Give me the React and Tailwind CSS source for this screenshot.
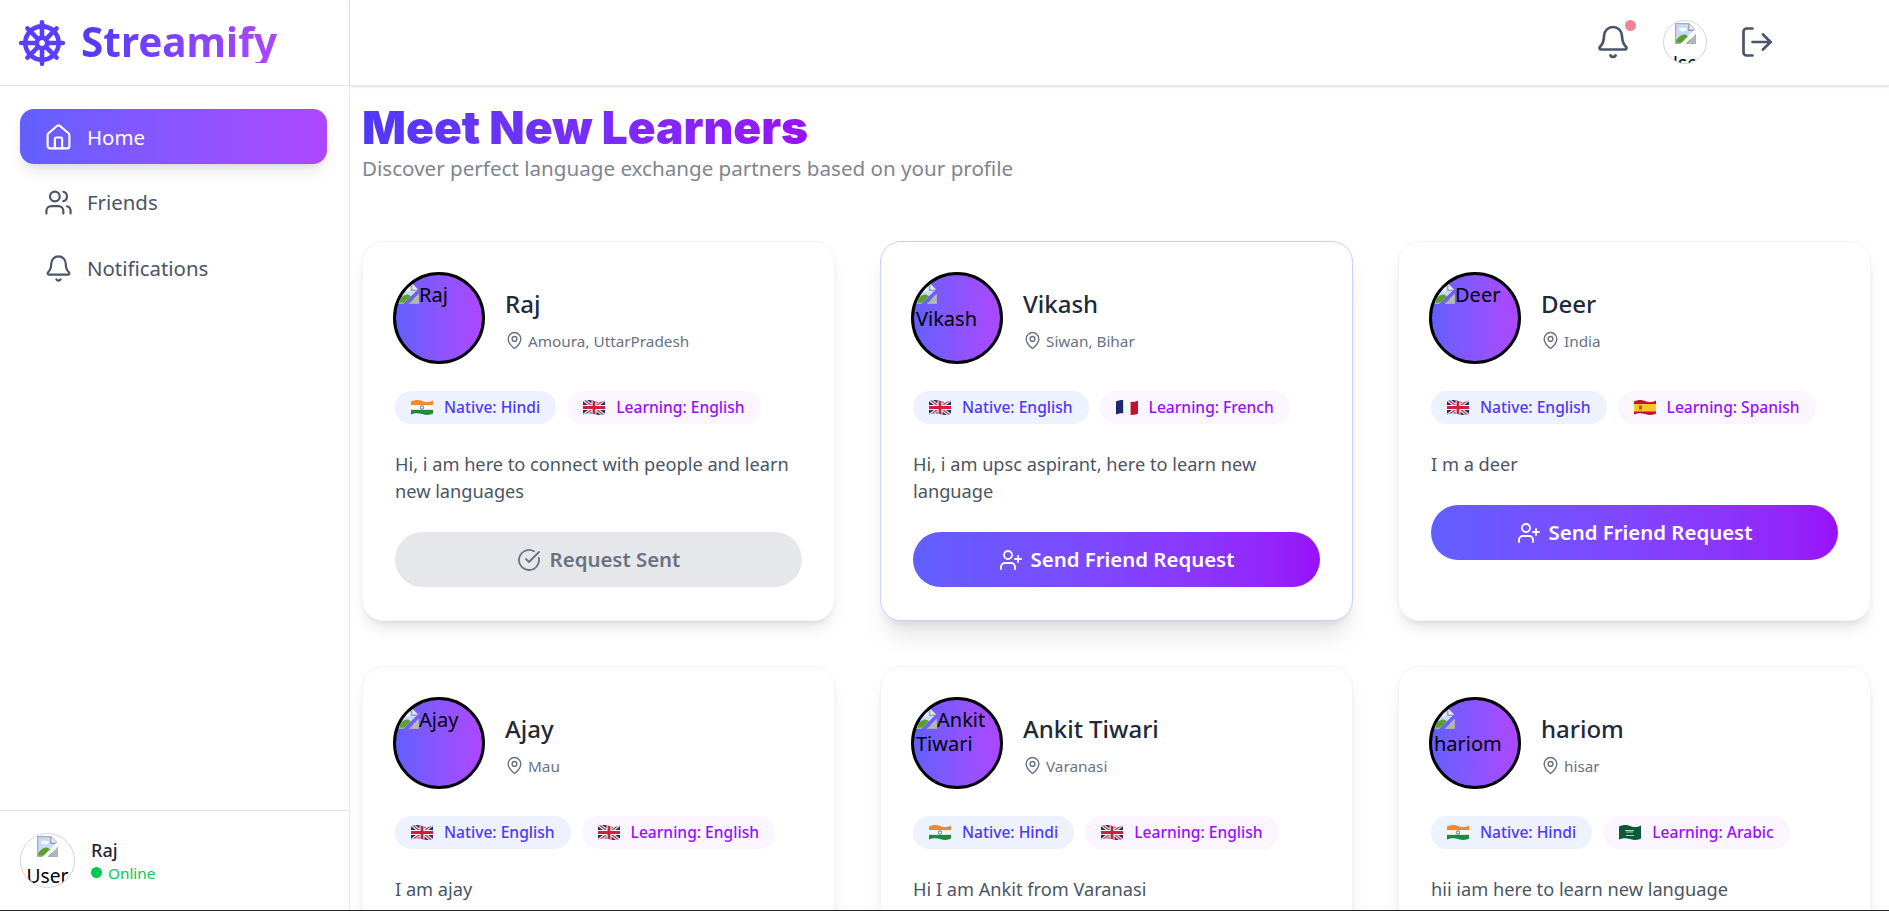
import { ShipWheel, House, Users, Bell, LogOut, MapPin, UserPlus, CircleCheckBig } from 'lucide-react'

const WAVE = 'M0 2.5C4 .5 8 .5 11 2s7 1.5 11-.5v13c-4 2-7 1.5-11 .5s-7-1-11 .5z'

function Flag({ code }) {
  return (
    <svg viewBox="0 0 22 17" className="w-[22px] h-[17px] shrink-0">
      <clipPath id={`wave-${code}`}>
        <path d={WAVE} />
      </clipPath>
      <g clipPath={`url(#wave-${code})`}>
        {code === 'in' && (
          <>
            <rect width="22" height="6.5" fill="#f08a2c" />
            <rect y="6.2" width="22" height="4.8" fill="#f8f8f8" />
            <rect y="10.8" width="22" height="7" fill="#1f8a3b" />
            <circle cx="11" cy="8.5" r="1.7" fill="none" stroke="#2a3a8c" strokeWidth=".7" />
          </>
        )}
        {code === 'uk' && (
          <>
            <rect width="22" height="17" fill="#1f2f6e" />
            <path d="M0 0l22 17M22 0L0 17" stroke="#f4f4f4" strokeWidth="3.4" />
            <path d="M0 0l22 17M22 0L0 17" stroke="#cf1f3f" strokeWidth="1.2" />
            <path d="M11 0v17M0 8.5h22" stroke="#f4f4f4" strokeWidth="5" />
            <path d="M11 0v17M0 8.5h22" stroke="#cf1f3f" strokeWidth="2.8" />
          </>
        )}
        {code === 'fr' && (
          <>
            <rect width="7.5" height="17" fill="#1a2a6c" />
            <rect x="7.3" width="7.4" height="17" fill="#f6f6f6" />
            <rect x="14.6" width="7.4" height="17" fill="#c8102e" />
          </>
        )}
        {code === 'es' && (
          <>
            <rect width="22" height="17" fill="#c8102e" />
            <rect y="5" width="22" height="7.5" fill="#f7c52c" />
            <rect x="5" y="6.5" width="3" height="4" fill="#b5532a" />
          </>
        )}
        {code === 'sa' && (
          <>
            <rect width="22" height="17" fill="#0b5a34" />
            <path d="M6 6.5h9M7 8h7M7 11.5h8" stroke="#dfeee6" strokeWidth=".8" />
          </>
        )}
      </g>
    </svg>
  )
}

// chrome's broken image glyph, the tear stays see-through
function BrokenImage() {
  return (
    <svg viewBox="0 0 16 16" className="inline-block w-[21px] h-[21px] relative -top-[3px]">
      <clipPath id="torn-image">
        <path d="M0 0h16v4L4 16H0zM16 8v8H8z" />
      </clipPath>
      <g clipPath="url(#torn-image)">
        <path d="M.5.5h10l5 5v10H.5z" fill="#c9dbf6" stroke="#a9adb3" />
        <path d="M10.5.5v5h5" fill="#eceef1" stroke="#9aa0a6" />
        <ellipse cx="6" cy="5" rx="3" ry="1.5" fill="#f4f7fc" />
        <path d="M1 15v-2c2-3 5-5 7-4s3 2 5 6z" fill="#5aa02c" />
        <path d="M9 15.5h6.5V9z" fill="#b3b6ba" />
      </g>
    </svg>
  )
}

function AltAvatar({ alt, className }) {
  return (
    <div className={`rounded-full overflow-hidden shrink-0 text-black ${className}`}>
      <BrokenImage />
      {alt}
    </div>
  )
}

function NavItem({ icon: Icon, label, active }) {
  return (
    <a
      className={`flex items-center gap-[14px] h-[55px] pl-[24px] pt-[1px] rounded-[14px] text-[20.4px] ${
        active
          ? 'bg-gradient-to-r from-indigo-500 to-purple-500 text-white shadow-lg'
          : 'text-gray-600'
      }`}
    >
      <Icon className="w-[29px] h-[29px] shrink-0" strokeWidth={1.8} />
      {label}
    </a>
  )
}

function Tag({ code, label, learning }) {
  return (
    <span
      className={`flex items-center gap-[11px] h-[33px] px-[16px] rounded-full text-[15.6px] font-medium ${
        learning ? 'bg-purple-50 text-purple-600' : 'bg-indigo-50 text-indigo-600'
      }`}
    >
      <Flag code={code} />
      {label}
    </span>
  )
}

function LearnerCard({ user, highlighted }) {
  return (
    <div
      className={`bg-white rounded-[21px] border px-[32px] pt-[30px] pb-[33px] ${
        highlighted ? 'border-indigo-200 shadow-xl' : 'border-gray-100 shadow-lg'
      }`}
    >
      <div className="flex items-center gap-[20px] -ml-[2px]">
        <AltAvatar
          alt={user.name}
          className="w-[92px] h-[92px] border-[3px] border-black bg-gradient-to-r from-indigo-500 to-purple-500 text-[20px] leading-[24px] pl-[2px] pr-[3px] pt-[8px]"
        />
        <div className="pt-[4px]">
          <div className="text-[24px] leading-[32px] font-medium text-gray-800">{user.name}</div>
          <div className="flex items-center gap-[4px] mt-[9px] text-[15.3px] leading-[24px] text-gray-500">
            <MapPin className="w-[19px] h-[19px]" strokeWidth={1.8} />
            {user.location}
          </div>
        </div>
      </div>
      <div className="flex gap-[11px] mt-[27px]">
        <Tag code={user.nativeFlag} label={`Native: ${user.native}`} />
        <Tag code={user.learningFlag} label={`Learning: ${user.learning}`} learning />
      </div>
      <p className="mt-[27px] text-[18.2px] leading-[27px] text-gray-600">{user.bio}</p>
      {user.sent ? (
        <button className="w-full h-[55px] mt-[27px] flex items-center justify-center gap-[9px] rounded-full bg-gray-200 text-gray-500 text-[20.4px] font-semibold">
          <CircleCheckBig className="w-6 h-6" strokeWidth={1.8} />
          Request Sent
        </button>
      ) : (
        <button className="w-full h-[55px] mt-[27px] flex items-center justify-center gap-[8px] rounded-full bg-gradient-to-r from-indigo-500 to-purple-600 text-white text-[20.4px] font-semibold">
          <UserPlus className="w-6 h-6" strokeWidth={1.8} />
          Send Friend Request
        </button>
      )}
    </div>
  )
}

const learners = [
  { name: 'Raj', location: 'Amoura, UttarPradesh', nativeFlag: 'in', native: 'Hindi', learningFlag: 'uk', learning: 'English', bio: 'Hi, i am here to connect with people and learn new languages', sent: true },
  { name: 'Vikash', location: 'Siwan, Bihar', nativeFlag: 'uk', native: 'English', learningFlag: 'fr', learning: 'French', bio: 'Hi, i am upsc aspirant, here to learn new language' },
  { name: 'Deer', location: 'India', nativeFlag: 'uk', native: 'English', learningFlag: 'es', learning: 'Spanish', bio: 'I m a deer' },
  { name: 'Ajay', location: 'Mau', nativeFlag: 'uk', native: 'English', learningFlag: 'uk', learning: 'English', bio: 'I am ajay' },
  { name: 'Ankit Tiwari', location: 'Varanasi', nativeFlag: 'in', native: 'Hindi', learningFlag: 'uk', learning: 'English', bio: 'Hi I am Ankit from Varanasi' },
  { name: 'hariom', location: 'hisar', nativeFlag: 'in', native: 'Hindi', learningFlag: 'sa', learning: 'Arabic', bio: 'hii iam here to learn new language' },
]

export default function App() {
  return (
    <div className="h-[911px] flex flex-col overflow-hidden bg-white font-['Noto_Sans','Open_Sans',sans-serif]">
      <div className="flex flex-1 min-h-0">
        <aside className="w-[350px] shrink-0 flex flex-col border-r border-gray-200">
          <div className="h-[86px] shrink-0 flex items-center gap-[14px] pl-[17px] border-b border-gray-200">
            <ShipWheel className="w-[50px] h-[50px] text-[#5a3dff]" strokeWidth={2.2} />
            <span className="text-[40.5px] leading-none font-bold bg-gradient-to-r from-indigo-600 to-purple-500 bg-clip-text text-transparent">
              Streamify
            </span>
          </div>
          <nav className="flex flex-col gap-[10.5px] pl-[20px] pr-[22px] pt-[23px]">
            <NavItem icon={House} label="Home" active />
            <NavItem icon={Users} label="Friends" />
            <NavItem icon={Bell} label="Notifications" />
          </nav>
          <div className="mt-auto h-[100px] flex items-center gap-[16px] pl-[20px] border-t border-gray-200">
            <AltAvatar alt="User" className="w-[55px] h-[55px] border border-gray-300 text-[19.2px] leading-[28px] text-center" />
            <div>
              <div className="text-[18px] leading-[24px] font-medium text-gray-800">Raj</div>
              <div className="flex items-center gap-[6px] text-[15.3px] leading-[22px] text-green-500">
                <span className="w-[11px] h-[11px] rounded-full bg-green-500" />
                Online
              </div>
            </div>
          </div>
        </aside>
        <div className="flex-1 min-w-0 flex flex-col">
          <header className="h-[86px] shrink-0 flex items-center justify-end gap-[32px] pr-[114px] pb-[2px] border-b border-gray-200 shadow-sm">
            <div className="relative">
              <Bell className="w-9 h-9 text-gray-600" strokeWidth={1.8} />
              <span className="absolute -top-[4px] -right-[5px] w-[11px] h-[11px] rounded-full bg-[#ee8593]" />
            </div>
            <AltAvatar alt="User" className="w-[44px] h-[44px] border border-gray-300 text-[19.2px] leading-[28px] text-center" />
            <LogOut className="w-9 h-9 text-gray-600" strokeWidth={1.8} />
          </header>
          <main className="flex-1 min-h-0 overflow-hidden pl-[12px] pr-[18px] pt-[15px]">
            <h1 className="text-[46px] leading-[53px] font-black font-['Inter',sans-serif] w-fit bg-gradient-to-r from-indigo-600 to-purple-600 bg-clip-text text-transparent">
              Meet New Learners
            </h1>
            <p className="text-[20.6px] leading-[29px] text-[#808591]">
              Discover perfect language exchange partners based on your profile
            </p>
            <div className="grid grid-cols-3 gap-[45px] mt-[58px]">
              {learners.map((user, i) => (
                <LearnerCard key={user.name} user={user} highlighted={i === 1} />
              ))}
            </div>
          </main>
        </div>
      </div>
      <div className="h-px shrink-0 bg-[#222]" />
    </div>
  )
}
